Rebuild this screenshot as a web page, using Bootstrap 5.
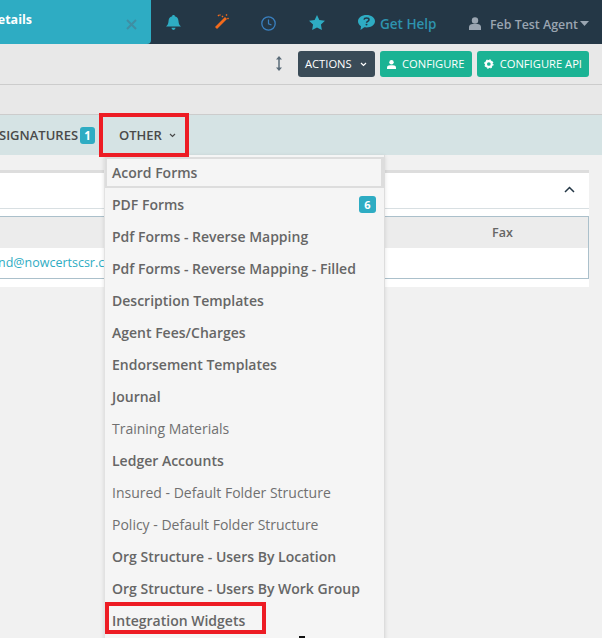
<!DOCTYPE html>
<html lang="en"><head><meta charset="utf-8"><title>Details</title>
<link href="https://cdn.jsdelivr.net/npm/bootstrap@5.3.0/dist/css/bootstrap.min.css" rel="stylesheet">
<style>
html,body{height:638px;overflow:hidden}
body{font-family:"Open Sans",sans-serif;background:#f1f1f1;color:#555;font-size:14px}
.stage{position:relative;width:602px;height:638px;overflow:hidden}
.topbar{height:44px;background:#243746}
.tabcur{width:151px;background:#2eacc3;border-radius:0 0 4px 0;color:#fff;font-weight:700;font-size:12.5px;padding:11px 0 0 0}
.tabtitle{display:block;width:32px;height:20px;margin-right:119px;overflow:hidden;direction:rtl;white-space:nowrap}
.tabx{position:absolute;left:125px;top:18px}
.ticon{position:absolute;top:15px}
.help{position:absolute;left:380px;top:14px;color:#2e93ae;font-weight:600;font-size:13.5px;line-height:20px}
.agent{position:absolute;left:490px;top:15px;color:#9aa5b1;font-weight:600;font-size:12.4px;line-height:19px;white-space:nowrap}
.toolbar{height:41px;background:#e8e8e8;border-bottom:1px solid #ccc;padding:7px 13px 0 0;gap:5px}
.tbtn{height:26px;border-radius:3px;color:#fff;font-size:11.2px;line-height:26px;padding:0 7px;display:flex;align-items:center;gap:6px;white-space:nowrap}
.tdark{background:#3a4b57;width:77px;gap:8px}
.tgreen{background:#1bb394}
.blank{height:30px;background:#e8e8e8;border-bottom:1px solid #ccc}
.strip{height:40px;background:#d5e3e4;position:relative}
.striptext{position:absolute;left:-1px;top:10px;gap:2px;font-weight:600;font-size:13px;line-height:20px;color:#4a4a4a;white-space:nowrap}
.cnt{display:inline-block;background:#2eacc3;color:#fff;border-radius:3px;font-weight:700;text-align:center}
.cntsm{width:15px;height:17px;font-size:11.5px;line-height:17px}
.other{position:absolute;left:119px;top:10px;font-weight:600;font-size:13px;line-height:20px;color:#4a4a4a}
.mainwrap{padding:15px 13px 0 0}
.panel{background:#fff;border-top:3px solid #ddd;height:117px}
.panelhead{height:36px;border-bottom:1px solid #d8dfe2;position:relative}
.datatable{margin-top:7px;height:63px;border:1px solid #abc0cb;border-left:0}
.thead2{height:31px;background:#ececec;position:relative}
.faxh{position:absolute;left:492px;top:7px;font-weight:600;font-size:12.5px;line-height:18px;color:#666}
.mailcell{color:#2eacc3;font-size:12.5px;line-height:20px;padding-top:5px;margin-left:-2px;white-space:nowrap}
.ddmenu{position:absolute;left:104px;top:155px;width:281px;height:490px;background:#f5f5f5;border-right:1px solid #ddd;border-left:1px solid #e2e2e2;box-shadow:0 1px 4px rgba(0,0,0,.12);z-index:5}
.ditem{display:flex;justify-content:space-between;align-items:center;height:32px;padding:0 8px 0 7px;font-size:14px;font-weight:600;color:#666;white-space:nowrap}
.dlight{font-weight:400;color:#707070}
.dfirst{height:31px;margin-top:2px;border:2px solid #ddd;border-right-width:3px;padding-left:5px}
.dcount{width:17px;height:17px;font-size:11px;line-height:17px}
.redbox{position:absolute;border:4px solid #ed1c24;z-index:9}
.ra{left:99px;top:113px;width:90px;height:44px}
.rb{left:105px;top:602px;width:161px;height:32px}
.tick{position:absolute;left:299px;top:636px;width:6px;height:2px;background:#111;z-index:9}
</style></head>
<body>
<div class="stage">
 <div class="topbar d-flex position-relative">
  <div class="tabcur position-relative"><span class="tabtitle">Details</span>
   <svg class="tabx" width="13" height="13" viewBox="0 0 13 13"><path d="M2 2l9 9M11 2l-9 9" stroke="#3f8ea3" stroke-width="2"/></svg></div>
  <svg class="ticon" style="left:166px" width="15" height="15" viewBox="0 0 15 17" preserveAspectRatio="none"><path d="M7.500 0c1 0 1.300.7 1.300 1.300C11.500 2 12.300 4 12.500 7c.2 3 1 4.500 2.500 6H0c1.500-1.500 2.300-3 2.500-6C2.700 4 3.500 2 6.200 1.300 6.200.7 6.500 0 7.500 0zM5.500 14.500h4C9.300 16 8.500 17 7.500 17s-1.800-1-2-2.500z" fill="#2eacc3"/></svg>
  <svg class="ticon" style="left:214px;top:14px" width="15" height="16" viewBox="0 0 15 16"><path d="M1 14.500L11 4.500l2 2-10 10z" fill="#f26a1b" transform="translate(0 -1.500)"/><path d="M8 2l1 1M4 1l1 1M12 .5l1 1M13.500 4l1 1M6 .5v1" stroke="#f26a1b" stroke-width="1.500"/></svg>
  <svg class="ticon" style="left:261px;top:16px" width="15" height="15" viewBox="0 0 15 15"><circle cx="7.500" cy="7.500" r="6.700" fill="none" stroke="#3a80c0" stroke-width="1.300"/><path d="M7.500 3.500v4.300l3 1.200" fill="none" stroke="#3a80c0" stroke-width="1.200"/></svg>
  <svg class="ticon" style="left:309px" width="16" height="15" viewBox="0 0 17 16"><path d="M8.500 0l2.500 5.300 6 .8-4.300 4.100 1 5.800-5.200-2.800L3.300 16l1-5.800L0 6.100l6-.8z" fill="#2eacc3"/></svg>
  <svg class="ticon" style="left:358px" width="17" height="16" viewBox="0 0 17 18" preserveAspectRatio="none"><path d="M8.500 0C13.200 0 17 3 17 7c0 4-3.800 7-8.500 7-.8 0-1.500-.1-2.200-.2L2.500 17l.5-4.300C1.100 11.400 0 9.300 0 7c0-4 3.800-7 8.500-7z" fill="#2eacc3"/><path d="M6 5.300C6.200 4 7.200 3.400 8.500 3.400c1.500 0 2.500.9 2.500 2 0 1.800-2.500 1.800-2.500 3.400" fill="none" stroke="#243746" stroke-width="1.500"/><circle cx="8.500" cy="10.800" r="1" fill="#243746"/></svg>
  <span class="help">Get Help</span>
  <svg class="ticon" style="left:469px;top:17px" width="12" height="13" viewBox="0 0 12 13"><circle cx="6" cy="3.500" r="3.200" fill="#9aa5b1"/><path d="M0 13V10c0-2 1.800-3 3.500-3h5C10.200 7 12 8 12 10v3z" fill="#9aa5b1"/></svg>
  <span class="agent">Feb Test Agent</span>
  <svg class="ticon" style="left:580px;top:21px" width="9" height="5" viewBox="0 0 9 5"><path d="M0 0h9L4.500 5z" fill="#9aa5b1"/></svg>
 </div>
 <div class="toolbar d-flex justify-content-end">
  <svg class="mt-1" style="margin-right:10px" width="8" height="17" viewBox="0 0 8 17"><path d="M4 1L1 4.500h6zM4 16L1 12.500h6z" fill="#5a6b78"/><path d="M4 3v11" stroke="#5a6b78" stroke-width="1.500"/></svg>
  <div class="tbtn tdark">ACTIONS <svg width="7" height="5" viewBox="0 0 7 5"><path d="M1 1l2.500 2.500L6 1" fill="none" stroke="#fff" stroke-width="1.200"/></svg></div>
  <div class="tbtn tgreen" style="width:92px"><svg width="9" height="9" viewBox="0 0 9 9"><circle cx="4.500" cy="2.300" r="2.200" fill="#fff"/><path d="M0 9V7.500C0 6 1.500 5.200 3 5.200h3C7.500 5.200 9 6 9 7.500V9z" fill="#fff"/></svg>CONFIGURE</div>
  <div class="tbtn tgreen" style="width:112px"><svg width="10" height="10" viewBox="0 0 10 10"><circle cx="5" cy="5" r="3" fill="none" stroke="#fff" stroke-width="2.200"/><circle cx="5" cy="5" r="4.200" fill="none" stroke="#fff" stroke-width="1.400" stroke-dasharray="1.500 1.800"/></svg>CONFIGURE API</div>
 </div>
 <div class="blank"></div>
 <div class="strip">
  <div class="striptext d-flex align-items-center">SIGNATURES <span class="cnt cntsm">1</span></div>
  <span class="other">OTHER</span>
  <svg class="position-absolute" style="left:169px;top:18px" width="7" height="5" viewBox="0 0 7 5"><path d="M1 1l2.500 2.500L6 1" fill="none" stroke="#4a4a4a" stroke-width="1.200"/></svg>
 </div>
 <div class="mainwrap">
  <div class="panel">
   <div class="panelhead"><svg class="position-absolute" style="left:564px;top:13px" width="11" height="7" viewBox="0 0 11 7"><path d="M1 6l4.500-4.500L10 6" fill="none" stroke="#243746" stroke-width="1.500"/></svg></div>
   <div class="datatable">
    <div class="thead2"><span class="faxh">Fax</span></div>
    <div class="mailcell">nd@nowcertscsr.com</div>
   </div>
  </div>
 </div>
 <div class="ddmenu">
  <div class="ditem dfirst">Acord Forms</div>
  <div class="ditem">PDF Forms <span class="cnt dcount">6</span></div>
  <div class="ditem">Pdf Forms - Reverse Mapping</div>
  <div class="ditem">Pdf Forms - Reverse Mapping - Filled</div>
  <div class="ditem">Description Templates</div>
  <div class="ditem">Agent Fees/Charges</div>
  <div class="ditem">Endorsement Templates</div>
  <div class="ditem">Journal</div>
  <div class="ditem dlight">Training Materials</div>
  <div class="ditem">Ledger Accounts</div>
  <div class="ditem dlight">Insured - Default Folder Structure</div>
  <div class="ditem dlight">Policy - Default Folder Structure</div>
  <div class="ditem">Org Structure - Users By Location</div>
  <div class="ditem">Org Structure - Users By Work Group</div>
  <div class="ditem">Integration Widgets</div>
 </div>
 <div class="redbox ra"></div>
 <div class="redbox rb"></div>
 <div class="tick"></div>
</div>
<script src="https://cdn.jsdelivr.net/npm/bootstrap@5.3.0/dist/js/bootstrap.bundle.min.js"></script>
</body></html>
